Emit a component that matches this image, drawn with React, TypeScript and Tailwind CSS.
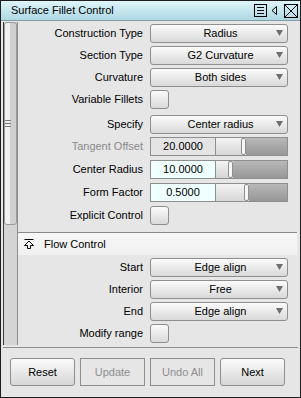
import React from "react";

const font = { fontFamily: '"Liberation Sans", Arial, sans-serif' };

function Arrow() {
  return (
    <svg width="7" height="6" viewBox="0 0 7 6" className="shrink-0">
      <polygon points="0,0 7,0 3.5,6" fill="#6e6e6e" />
    </svg>
  );
}

function Dropdown({ value }: { value: string }) {
  return (
    <div className="flex h-[19px] w-[138px] items-center rounded-[3px] border border-[#8e8e8e] bg-gradient-to-b from-[#fbfbfb] to-[#d9d9d9] pr-[4px]">
      <span className="flex-1 pl-[14px] text-center leading-none">{value}</span>
      <Arrow />
    </div>
  );
}

function Checkbox() {
  return (
    <div className="h-[19px] w-[19px] rounded-[3px] border border-[#8e8e8e] bg-gradient-to-b from-[#fbfbfb] to-[#d9d9d9]" />
  );
}

function NumField({ value, pos, disabled }: { value: string; pos: number; disabled?: boolean }) {
  return (
    <div className="flex h-[19px] w-[138px] border border-[#8e8e8e]">
      <div
        className={
          "flex w-[65px] items-center justify-center border-r border-[#8e8e8e] leading-none " +
          (disabled ? "bg-[#e4e4e4]" : "bg-[#f0ffff]")
        }
      >
        {value}
      </div>
      <div className="flex flex-1">
        <div className="bg-gradient-to-b from-[#f4f4f4] to-[#d6d6d6]" style={{ width: pos }} />
        <div className="w-[5px] rounded-[2px] border border-[#8e8e8e] bg-[#f7f7f7]" />
        <div className="flex-1 bg-gradient-to-b from-[#b8b8b8] to-[#979797]" />
      </div>
    </div>
  );
}

function Row({ label, h, dim, children }: { label: string; h: string; dim?: boolean; children: React.ReactNode }) {
  return (
    <div className={"flex items-center " + h}>
      <div className={"w-[125px] text-right leading-none " + (dim ? "text-[#8a8a8a]" : "text-black")}>{label}</div>
      <div className="ml-[7px] flex">{children}</div>
    </div>
  );
}

function Btn({ label, disabled }: { label: string; disabled?: boolean }) {
  return disabled ? (
    <div className="flex h-[28px] w-[65px] items-center justify-center border border-[#8e8e8e] text-[#8e8e8e]">{label}</div>
  ) : (
    <div className="flex h-[28px] w-[65px] items-center justify-center rounded-[3px] border border-[#8e8e8e] bg-gradient-to-b from-[#fbfbfb] to-[#d6d6d6] text-black">
      {label}
    </div>
  );
}

export default function App() {
  return (
    <div style={font} className="h-[398px] w-[301px] border border-[#1e1e1e] bg-[#e6e6e6] text-[11px] text-black">
      {/* title bar */}
      <div className="flex h-[20px] items-center border-b border-[#7f9ea8] bg-gradient-to-b from-[#dff5fa] to-[#aed8e3] pl-[10px] pr-[2px]">
        <span className="flex-1 text-[11px] leading-none">Surface Fillet Control</span>
        <svg width="13" height="13" viewBox="0 0 13 13" className="mr-[4px]">
          <rect x="0.5" y="0.5" width="12" height="12" fill="none" stroke="#000" />
          <line x1="3" y1="3.5" x2="10" y2="3.5" stroke="#000" />
          <line x1="3" y1="6.5" x2="10" y2="6.5" stroke="#000" />
          <line x1="3" y1="9.5" x2="10" y2="9.5" stroke="#000" />
        </svg>
        <svg width="6" height="9" viewBox="0 0 6 9" className="mr-[7px]">
          <polygon points="5.5,0.5 5.5,8.5 1,4.5" fill="none" stroke="#000" />
        </svg>
        <svg width="14" height="14" viewBox="0 0 14 14">
          <rect x="0.5" y="0.5" width="13" height="13" fill="none" stroke="#000" />
          <line x1="1" y1="1" x2="13" y2="13" stroke="#000" />
          <line x1="13" y1="1" x2="1" y2="13" stroke="#000" />
        </svg>
      </div>

      {/* scroll area */}
      <div className="flex h-[326px]">
        {/* scrollbar */}
        <div className="ml-[2px] mt-[1px] flex h-[323px] w-[15px] flex-col border-l border-[#3a3a3a] border-r border-r-[#8e8e8e] bg-[#d4d4d4]">
          <div className="flex h-[203px] flex-col items-center justify-center rounded-b-[3px] rounded-t-[3px] border border-[#9a9a9a] bg-gradient-to-r from-[#f0f0f0] from-50% to-[#d0d0d0] to-50%">
            <div className="mr-[5px] flex w-[6px] flex-col gap-[2px]">
              <div className="h-px bg-[#7a7a7a]" />
              <div className="h-px bg-[#7a7a7a]" />
              <div className="h-px bg-[#7a7a7a]" />
            </div>
          </div>
        </div>

        {/* content */}
        <div className="flex flex-1 flex-col pt-[1px]">
          <Row label="Construction Type" h="h-[22px]"><Dropdown value="Radius" /></Row>
          <Row label="Section Type" h="h-[22px]"><Dropdown value="G2 Curvature" /></Row>
          <Row label="Curvature" h="h-[22px]"><Dropdown value="Both sides" /></Row>
          <Row label="Variable Fillets" h="h-[22px]"><Checkbox /></Row>
          <div className="h-[3px]" />
          <Row label="Specify" h="h-[22px]"><Dropdown value="Center radius" /></Row>
          <Row label="Tangent Offset" h="h-[23px]" dim><NumField value="20.0000" pos={25} disabled /></Row>
          <Row label="Center Radius" h="h-[23px]"><NumField value="10.0000" pos={12} /></Row>
          <Row label="Form Factor" h="h-[23px]"><NumField value="0.5000" pos={28} /></Row>
          <Row label="Explicit Control" h="h-[23px]"><Checkbox /></Row>
          <div className="h-[5px]" />
          <div className="mr-[3px] flex h-[23px] items-center border-t border-[#8a8a8a] bg-gradient-to-b from-[#f7f7f7] to-[#f0f0f0] pl-[6px]">
            <svg width="10" height="10" viewBox="0 0 10 10" className="mr-[10px]">
              <line x1="0.5" y1="0.5" x2="9.5" y2="0.5" stroke="#000" />
              <polyline points="3.5,9.5 3.5,6.5 0.5,6.5 5,2 9.5,6.5 6.5,6.5 6.5,9.5 3.5,9.5" fill="none" stroke="#000" />
            </svg>
            <span className="leading-none">Flow Control</span>
          </div>
          <div className="h-[1px]" />
          <Row label="Start" h="h-[22px]"><Dropdown value="Edge align" /></Row>
          <Row label="Interior" h="h-[22px]"><Dropdown value="Free" /></Row>
          <Row label="End" h="h-[22px]"><Dropdown value="Edge align" /></Row>
          <Row label="Modify range" h="h-[22px]"><Checkbox /></Row>
        </div>
      </div>

      {/* buttons */}
      <div className="ml-[2px] mr-[2px] flex gap-[5px] border-t border-[#8e8e8e] pl-[7px] pt-[10px]">
        <Btn label="Reset" />
        <Btn label="Update" disabled />
        <Btn label="Undo All" disabled />
        <Btn label="Next" />
      </div>
    </div>
  );
}
